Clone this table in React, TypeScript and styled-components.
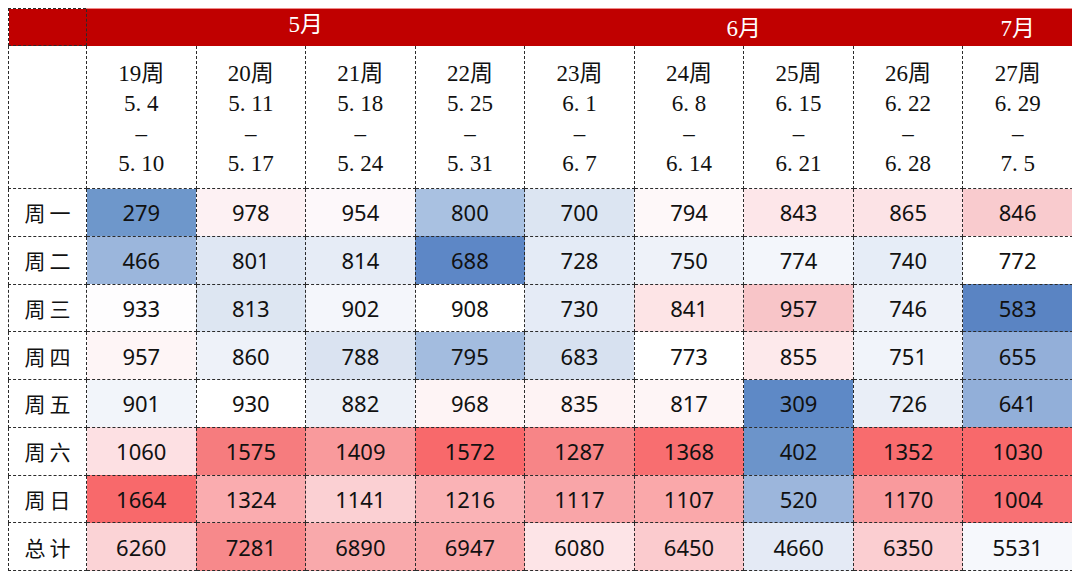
import styled, { createGlobalStyle } from "styled-components";

type Cell = [number, string];

const months = [
	{ label: "5月", span: 4, lift: true },
	{ label: "6月", span: 4, lift: false },
	{ label: "7月", span: 1, lift: false },
];

const weeks = [
	{ no: 19, from: "5. 4", to: "5. 10" },
	{ no: 20, from: "5. 11", to: "5. 17" },
	{ no: 21, from: "5. 18", to: "5. 24" },
	{ no: 22, from: "5. 25", to: "5. 31" },
	{ no: 23, from: "6. 1", to: "6. 7" },
	{ no: 24, from: "6. 8", to: "6. 14" },
	{ no: 25, from: "6. 15", to: "6. 21" },
	{ no: 26, from: "6. 22", to: "6. 28" },
	{ no: 27, from: "6. 29", to: "7. 5" },
];

const rows: { label: string; cells: Cell[] }[] = [
	{
		label: "周一",
		cells: [
			[279, "#6E97CB"], [978, "#FDF1F3"], [954, "#FDF8FA"], [800, "#A9C1E1"], [700, "#DCE5F2"],
			[794, "#FEF8F9"], [843, "#FDE6E9"], [865, "#FCE3E6"], [846, "#F9CBCE"],
		],
	},
	{
		label: "周二",
		cells: [
			[466, "#9BB6DC"], [801, "#DFE7F3"], [814, "#E6ECF6"], [688, "#5D87C6"], [728, "#E4EBF6"],
			[750, "#EEF2F9"], [774, "#F3F6FB"], [740, "#E6EDF7"], [772, "#FFFFFF"],
		],
	},
	{
		label: "周三",
		cells: [
			[933, "#FEFDFE"], [813, "#DDE6F2"], [902, "#F4F6FB"], [908, "#FFFFFF"], [730, "#E5EBF6"],
			[841, "#FDE4E6"], [957, "#F8C5C8"], [746, "#EEF2F9"], [583, "#5A84C3"],
		],
	},
	{
		label: "周四",
		cells: [
			[957, "#FEF5F6"], [860, "#EEF2F9"], [788, "#DAE3F1"], [795, "#A3BCDF"], [683, "#D7E1F0"],
			[773, "#FFFFFF"], [855, "#FDE9EB"], [751, "#F1F4FA"], [655, "#93AFD9"],
		],
	},
	{
		label: "周五",
		cells: [
			[901, "#F2F5FA"], [930, "#FFFFFF"], [882, "#EDF1F8"], [968, "#FEF4F5"], [835, "#FEF3F4"],
			[817, "#FEF5F6"], [309, "#5E89C6"], [726, "#E9EEF7"], [641, "#92AFD9"],
		],
	},
	{
		label: "周六",
		cells: [
			[1060, "#FDE0E3"], [1575, "#F67C7E"], [1409, "#F99A9C"], [1572, "#F8696B"], [1287, "#F78587"],
			[1368, "#F86E70"], [402, "#6C94CA"], [1352, "#F86C6E"], [1030, "#F8696B"],
		],
	},
	{
		label: "周日",
		cells: [
			[1664, "#F8696B"], [1324, "#FAACAF"], [1141, "#FBD0D3"], [1216, "#FAB3B6"], [1117, "#F9A5A8"],
			[1107, "#FAA8AA"], [520, "#9CB6DC"], [1170, "#F99A9D"], [1004, "#F87174"],
		],
	},
	{
		label: "总计",
		cells: [
			[6260, "#FBD3D6"], [7281, "#F7898B"], [6890, "#F9A9AB"], [6947, "#F9A5A7"], [6080, "#FDE4E7"],
			[6450, "#FBCBCE"], [4660, "#E4EAF5"], [6350, "#FBCED1"], [5531, "#F6F8FC"],
		],
	},
];

export default function App() {
	return (
		<>
			<GlobalStyle />
			<Sheet>
				<colgroup>
					<LabelCol />
					{weeks.map((w) => (
						<WeekCol key={w.no} />
					))}
				</colgroup>
				<thead>
					<MonthRow>
						<Corner />
						{months.map((m) => (
							<MonthCell key={m.label} colSpan={m.span} $lift={m.lift}>
								{m.label}
							</MonthCell>
						))}
					</MonthRow>
					<WeekRow>
						<BlankHead />
						{weeks.map((w) => (
							<WeekHead key={w.no}>
								<div>{w.no}周</div>
								<div>{w.from}</div>
								<div>–</div>
								<div>{w.to}</div>
							</WeekHead>
						))}
					</WeekRow>
				</thead>
				<tbody>
					{rows.map((r) => (
						<DataRow key={r.label}>
							<DayLabel>{r.label}</DayLabel>
							{r.cells.map(([v, bg], i) => (
								<ValueCell key={i} $bg={bg}>
									{v}
								</ValueCell>
							))}
						</DataRow>
					))}
				</tbody>
			</Sheet>
		</>
	);
}

const GlobalStyle = createGlobalStyle`
	body {
		margin: 8px;
		background: #ffffff;
		font-family: "Noto Sans", "Noto Sans CJK SC", sans-serif;
	}
`;

const line = "1px dashed #2b2b2b";

const Sheet = styled.table`
	width: 1064px;
	table-layout: fixed;
	border-collapse: collapse;
	color: #111;
`;

const LabelCol = styled.col`
	width: 78px;
`;

const WeekCol = styled.col`
	width: 109.56px;
`;

const MonthRow = styled.tr`
	height: 37px;
`;

const Corner = styled.th`
	background: #c00000;
	border: ${line};
	padding: 0;
`;

const MonthCell = styled.th<{ $lift: boolean }>`
	background: #c00000;
	border: none;
	border-top: 1px solid #ee8a8a;
	color: #ffffff;
	font-family: "Liberation Serif", "Noto Sans CJK SC", serif;
	font-size: 23px;
	font-weight: 400;
	text-align: center;
	padding: ${(p) => (p.$lift ? "0 0 5px" : "3px 0 0")};
	line-height: 1;
`;

const WeekRow = styled.tr`
	height: 143px;
`;

const BlankHead = styled.th`
	border: ${line};
	background: #fff;
`;

const WeekHead = styled.th`
	border: ${line};
	border-top: none;
	background: #fff;
	font-family: "Liberation Serif", "Noto Sans CJK SC", serif;
	font-size: 23px;
	font-weight: 400;
	line-height: 30px;
	text-align: center;
	vertical-align: middle;
	padding: 4px 0 0;
	white-space: pre;
`;

const DataRow = styled.tr`
	height: 47.75px;
`;

const DayLabel = styled.td`
	border: ${line};
	background: #fff;
	font-family: "Noto Sans CJK SC", sans-serif;
	font-size: 21px;
	letter-spacing: 4px;
	padding: 0 0 0 4px;
	text-align: center;
	vertical-align: middle;
`;

const ValueCell = styled.td<{ $bg: string }>`
	border: ${line};
	background: ${(p) => p.$bg};
	font-size: 22px;
	text-align: center;
	vertical-align: middle;
	padding: 0;
`;
